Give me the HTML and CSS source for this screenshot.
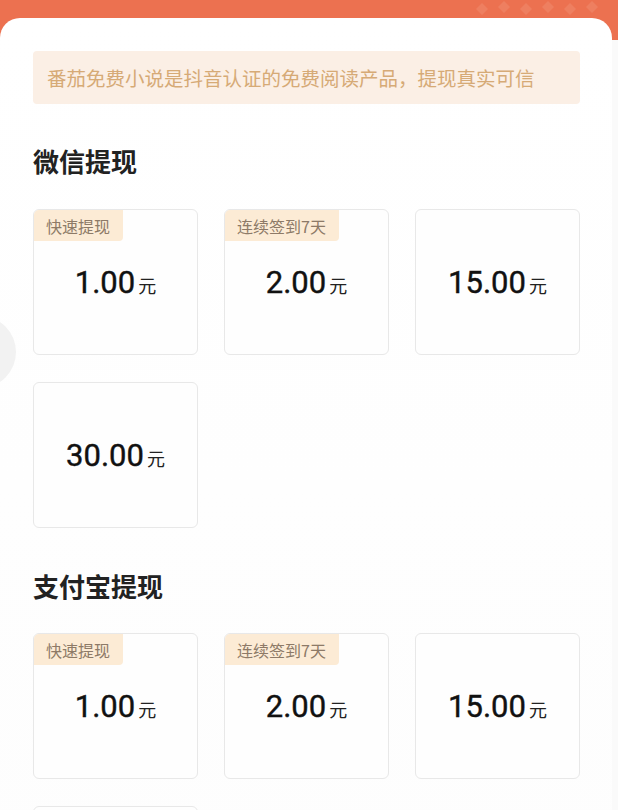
FILE: index.html
```html
<!DOCTYPE html>
<html lang="zh-CN">
<head>
<meta charset="utf-8">
<title>提现</title>
<link rel="stylesheet" href="styles.css">
</head>
<body>
<div class="page">
  <header class="top">
    <svg class="deco" width="140" height="20" viewBox="0 0 140 20">
      <g fill="#f29274">
        <path d="M10 3 L16 9 L10 15 L4 9 Z"/>
        <path d="M32 1 L38 7 L32 13 L26 7 Z"/>
        <path d="M54 3 L60 9 L54 15 L48 9 Z"/>
        <path d="M76 1 L82 7 L76 13 L70 7 Z"/>
        <path d="M98 3 L104 9 L98 15 L92 9 Z"/>
        <path d="M120 1 L126 7 L120 13 L114 7 Z"/>
      </g>
    </svg>
  </header>
  <div class="float-btn"></div>
  <main class="sheet">
    <div class="notice">番茄免费小说是抖音认证的免费阅读产品，提现真实可信</div>

    <h2 class="section-title first">微信提现</h2>
    <div class="grid">
      <div class="option"><span class="tag">快速提现</span><div class="amount"><span class="num">1.00</span><span class="unit">元</span></div></div>
      <div class="option"><span class="tag">连续签到7天</span><div class="amount"><span class="num">2.00</span><span class="unit">元</span></div></div>
      <div class="option"><div class="amount"><span class="num">15.00</span><span class="unit">元</span></div></div>
      <div class="option"><div class="amount"><span class="num">30.00</span><span class="unit">元</span></div></div>
    </div>

    <h2 class="section-title">支付宝提现</h2>
    <div class="grid">
      <div class="option"><span class="tag">快速提现</span><div class="amount"><span class="num">1.00</span><span class="unit">元</span></div></div>
      <div class="option"><span class="tag">连续签到7天</span><div class="amount"><span class="num">2.00</span><span class="unit">元</span></div></div>
      <div class="option"><div class="amount"><span class="num">15.00</span><span class="unit">元</span></div></div>
      <div class="option"><div class="amount"><span class="num">30.00</span><span class="unit">元</span></div></div>
    </div>
  </main>
</div>
</body>
</html>
```

FILE: styles.css
```css
html, body {
  margin: 0;
  padding: 0;
  background: #fafafa;
  font-family: "Noto Sans CJK SC", "Noto Sans", sans-serif;
}

.page {
  position: relative;
  width: 618px;
  height: 810px;
  overflow: hidden;
}

.top {
  position: relative;
  height: 40px;
  background: #ec7150;
}

.deco {
  position: absolute;
  right: 6px;
  top: 0;
  opacity: 0.45;
}

.float-btn {
  position: absolute;
  left: -56px;
  top: 316px;
  width: 72px;
  height: 72px;
  border-radius: 50%;
  background: #f2f2f2;
  z-index: 2;
}

.sheet {
  position: relative;
  width: 612px;
  margin-top: -22px;
  box-sizing: border-box;
  padding: 33px 32px 0 33px;
  background: linear-gradient(180deg, #ffffff 0%, #fdfdfd 100%);
  border-radius: 20px 20px 0 0;
  min-height: 800px;
}

.notice {
  height: 53px;
  box-sizing: border-box;
  padding-left: 14px;
  display: flex;
  align-items: center;
  background: #fbefe5;
  color: #d6aa76;
  font-size: 19.5px;
  border-radius: 4px;
  white-space: nowrap;
}

.section-title {
  margin: 40px 0 29px 0;
  font-size: 26px;
  line-height: 36px;
  font-weight: 700;
  color: #222222;
}

.section-title.first {
  margin-top: 39px;
  margin-bottom: 30px;
}

.grid {
  display: grid;
  grid-template-columns: repeat(3, 165px);
  column-gap: 26px;
  row-gap: 27px;
}

.option {
  position: relative;
  height: 146px;
  box-sizing: border-box;
  border: 1px solid #e8e8e8;
  border-radius: 6px;
  background: #fefefe;
  overflow: hidden;
  display: flex;
  align-items: center;
  justify-content: center;
}

.tag {
  position: absolute;
  left: 0;
  top: 0;
  height: 31px;
  padding: 0 13px 0 12px;
  display: flex;
  align-items: center;
  background: #fcebd5;
  color: #8d7a67;
  font-size: 16px;
  border-bottom-right-radius: 4px;
}

.amount {
  display: flex;
  align-items: baseline;
  gap: 3px;
  color: #111111;
}

.num {
  font-family: Roboto, "Liberation Sans", sans-serif;
  font-size: 31px;
  font-weight: 400;
  -webkit-text-stroke: 0.4px #111111;
}

.unit {
  font-size: 18px;
  color: #222222;
}
```
